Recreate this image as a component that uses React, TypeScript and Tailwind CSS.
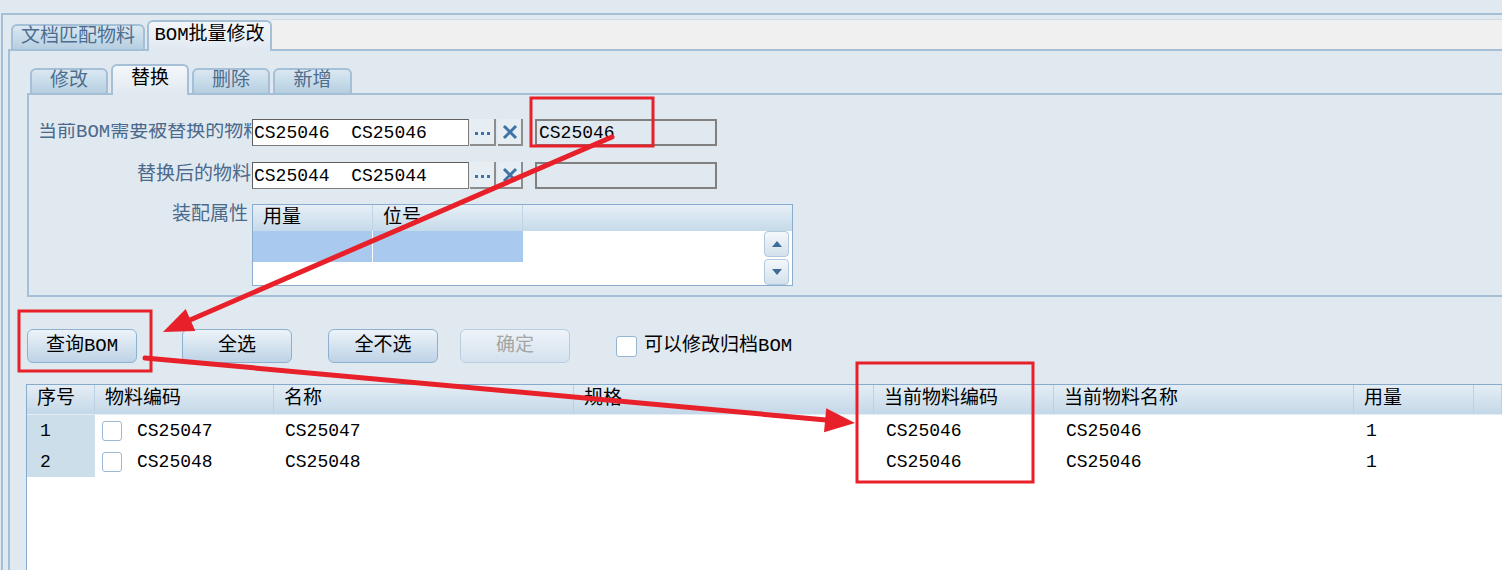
import clsx from "clsx";

const BORDER = "border-[#a5bfd7]";

function OuterTab({ label, active, width }: { label: string; active?: boolean; width: string }) {
	return (
		<div
			className={clsx(
				"flex items-center justify-center rounded-t-[6px] border-2 text-[19px] leading-none",
				BORDER,
				width,
				active
					? "h-[31px] border-b-0 bg-linear-to-b from-[#f3f7fa] to-[#e0e8f0] pb-[3px] text-black"
					: "h-[27px] bg-linear-to-b from-[#dae8f2] to-[#b6cfe1] text-[#4d6d8e]"
			)}
		>
			{label}
		</div>
	);
}

function Gap({ className }: { className: string }) {
	return <div className={clsx("border-b-2", BORDER, className)} />;
}

function IconButtons() {
	return (
		<>
			<div className="ml-[1px] flex h-[27px] w-[26px] items-center justify-center border-r-2 border-b-2 border-[#8d8d8d] bg-[#e6edf3]">
				<span className="mt-[4px] flex gap-[3px]">
					<i className="block size-[3px] bg-[#3c72aa]" />
					<i className="block size-[3px] bg-[#3c72aa]" />
					<i className="block size-[3px] bg-[#3c72aa]" />
				</span>
			</div>
			<div className="ml-[2px] flex h-[27px] w-[25px] items-center justify-center border-r-2 border-b-2 border-[#8d8d8d] bg-[#e6edf3]">
				<svg width="16" height="16" viewBox="0 0 16 16">
					<path d="M2 2 L14 14 M14 2 L2 14" stroke="#3f72a6" strokeWidth="3" />
				</svg>
			</div>
		</>
	);
}

function ScrollBtn({ up }: { up?: boolean }) {
	return (
		<div className="flex h-[26px] w-[25px] items-center justify-center rounded-[4px] border border-[#b2c8dc] bg-linear-to-b from-[#f4f8fb] to-[#d3e1ec]">
			<svg width="10" height="6" viewBox="0 0 10 6">
				<path d={up ? "M0 6 L5 0 L10 6 Z" : "M0 0 L10 0 L5 6 Z"} fill="#3f6c98" />
			</svg>
		</div>
	);
}

function Button({ label, disabled, className }: { label: string; disabled?: boolean; className?: string }) {
	return (
		<div
			className={clsx(
				"flex h-[34px] w-[110px] items-center justify-center rounded-[6px] border text-[19px] leading-none",
				disabled
					? "border-[#b8cde0] bg-linear-to-b from-[#eef3f8] to-[#d4e2ee] text-[#a5a5a5]"
					: "border-[#8fb1cf] bg-linear-to-b from-[#edf3f9] to-[#bdd3e6] text-black",
				className
			)}
		>
			{label}
		</div>
	);
}

const rows = [
	{ no: "1", code: "CS25047", name: "CS25047", cur: "CS25046", curName: "CS25046", qty: "1" },
	{ no: "2", code: "CS25048", name: "CS25048", cur: "CS25046", curName: "CS25046", qty: "1" },
];

const headers = ["序号", "物料编码", "名称", "规格", "当前物料编码", "当前物料名称", "用量", ""];

export default function App() {
	return (
		<div className="relative flex h-[570px] w-[1502px] flex-col overflow-hidden bg-[#e0e8f0] pt-[13px] font-['Liberation_Mono','Noto_Sans_CJK_SC',monospace]">
			<div className={clsx("ml-[1px] flex flex-1 flex-col border-t-2 border-l-2", BORDER)}>
				{/* outer tabs */}
				<div className="ml-[5px] flex h-[36px] items-end">
					<Gap className="w-[3px]" />
					<OuterTab label="文档匹配物料" width="w-[134px]" />
					<Gap className="w-[2px]" />
					<OuterTab label="BOM批量修改" width="w-[125px]" active />
					<div className="h-[32px] flex-1 border-t border-b-2 border-t-[#cddbe8] border-b-[#a5bfd7] bg-[#f0f0f0]" />
				</div>

				<div className={clsx("ml-[5px] flex flex-1 flex-col border-l-2 pl-[17px]", BORDER)}>
					{/* inner tabs */}
					<div className="flex h-[44px] items-end">
						<Gap className="w-[3px]" />
						<OuterTab label="修改" width="w-[78px]" />
						<Gap className="w-[3px]" />
						<OuterTab label="替换" width="w-[78px]" active />
						<Gap className="w-[3px]" />
						<OuterTab label="删除" width="w-[78px]" />
						<Gap className="w-[3px]" />
						<OuterTab label="新增" width="w-[79px]" />
						<Gap className="flex-1" />
					</div>

					{/* replace panel */}
					<div className={clsx("flex flex-col border-b-2 border-l-2 pt-[24px] pb-[9px] text-[19px] leading-none", BORDER)}>
						<div className="flex h-[27px] items-center">
							<div className="w-[223px] overflow-hidden pl-[9px] whitespace-nowrap text-[#4a6a8c]">当前BOM需要被替换的物料</div>
							<div className="flex h-[27px] w-[217px] items-center border border-[#7b7b7b] border-t-[#5f5f5f] border-l-[#5f5f5f] bg-white pl-[1px] text-[18px] whitespace-pre text-black">
								CS25046  CS25046
							</div>
							<IconButtons />
							<div className="ml-[12px] flex h-[27px] w-[182px] items-center border-2 border-[#808080] pl-[2px] text-[18px] text-black">CS25046</div>
						</div>
						<div className="mt-[16px] flex h-[27px] items-center">
							<div className="w-[223px] pr-[1px] text-right text-[#4a6a8c]">替换后的物料</div>
							<div className="flex h-[27px] w-[217px] items-center border border-[#7b7b7b] border-t-[#5f5f5f] border-l-[#5f5f5f] bg-white pl-[1px] text-[18px] whitespace-pre text-black">
								CS25044  CS25044
							</div>
							<IconButtons />
							<div className="ml-[12px] h-[27px] w-[182px] border-2 border-[#808080]" />
						</div>
						<div className="mt-[15px] flex items-start">
							<div className="w-[223px] pt-[2px] pr-[4px] text-right text-[#4a6a8c]">装配属性</div>
							<div className="flex h-[82px] w-[541px] flex-col border border-[#8aadcf] bg-white">
								<div className="flex h-[26px] bg-linear-to-b from-[#e6eff6] to-[#c6dae9]">
									<div className="flex w-[120px] items-center border-r border-[#bfd4e6] pl-[10px] text-black">用量</div>
									<div className="flex w-[150px] items-center border-r border-[#bfd4e6] pl-[10px] text-black">位号</div>
									<div className="flex-1" />
								</div>
								<div className="flex flex-1">
									<div className="flex flex-1 items-start">
										<div className="h-[31px] w-[120px] border-r border-white bg-[#a9caee]" />
										<div className="h-[31px] w-[150px] bg-[#a9caee]" />
									</div>
									<div className="flex w-[28px] flex-col gap-[2px] pr-[2px]">
										<ScrollBtn up />
										<ScrollBtn />
									</div>
								</div>
							</div>
						</div>
					</div>

					{/* action buttons */}
					<div className="mt-[32px] flex h-[34px] items-center">
						<Button label="查询BOM" />
						<Button label="全选" className="ml-[45px]" />
						<Button label="全不选" className="ml-[36px]" />
						<Button label="确定" disabled className="ml-[22px]" />
						<div className="ml-[46px] size-[21px] rounded-[3px] border border-[#96b5d2] bg-white" />
						<span className="ml-[7px] text-[19px] leading-none text-black">可以修改归档BOM</span>
					</div>

					{/* result table */}
					<div className="mt-[21px] -ml-[1px] flex flex-1 flex-col border-t border-l border-[#86aacb] bg-white leading-none">
						<div className="grid h-[29px] grid-cols-[68px_179px_300px_300px_180px_300px_120px_1fr] bg-linear-to-b from-[#e4edf5] to-[#c4d8e8] text-[19px]">
							{headers.map((h, i) => (
								<div key={i} className="flex items-center border-r border-[#bcd2e4] pl-[10px] text-black">
									{h}
								</div>
							))}
						</div>
						<div className="h-[1px] bg-[#e6eef5]" />
						{rows.map((r) => (
							<div key={r.no} className="grid h-[31px] grid-cols-[68px_179px_300px_300px_180px_300px_120px_1fr] text-[18px] text-black">
								<div className="flex items-center bg-[#cddeeb] pl-[13px]">{r.no}</div>
								<div className="flex items-center pl-[7px]">
									<div className="size-[20px] rounded-[3px] border border-[#9cb9d4] bg-white" />
									<span className="ml-[15px]">{r.code}</span>
								</div>
								<div className="flex items-center pl-[11px]">{r.name}</div>
								<div />
								<div className="flex items-center pl-[12px]">{r.cur}</div>
								<div className="flex items-center pl-[12px]">{r.curName}</div>
								<div className="flex items-center pl-[12px]">{r.qty}</div>
								<div />
							</div>
						))}
					</div>
				</div>
			</div>

			{/* red annotations */}
			<svg className="pointer-events-none absolute inset-0" width="1502" height="570">
				<g fill="none" stroke="#e8202a" strokeWidth="3">
					<rect x="531" y="98" width="122" height="48" />
					<rect x="19" y="311" width="132" height="60" />
					<rect x="857" y="363" width="176" height="119" />
				</g>
				<g stroke="#e8202a" strokeWidth="5" strokeLinecap="round">
					<line x1="612" y1="137" x2="190" y2="320" />
					<line x1="145" y1="358" x2="826" y2="420" />
				</g>
				<g fill="#e8202a">
					<polygon points="163,332 185.7,309.1 195.3,331.1" />
					<polygon points="855,423 826.2,408.3 824,432.3" />
				</g>
			</svg>
		</div>
	);
}
